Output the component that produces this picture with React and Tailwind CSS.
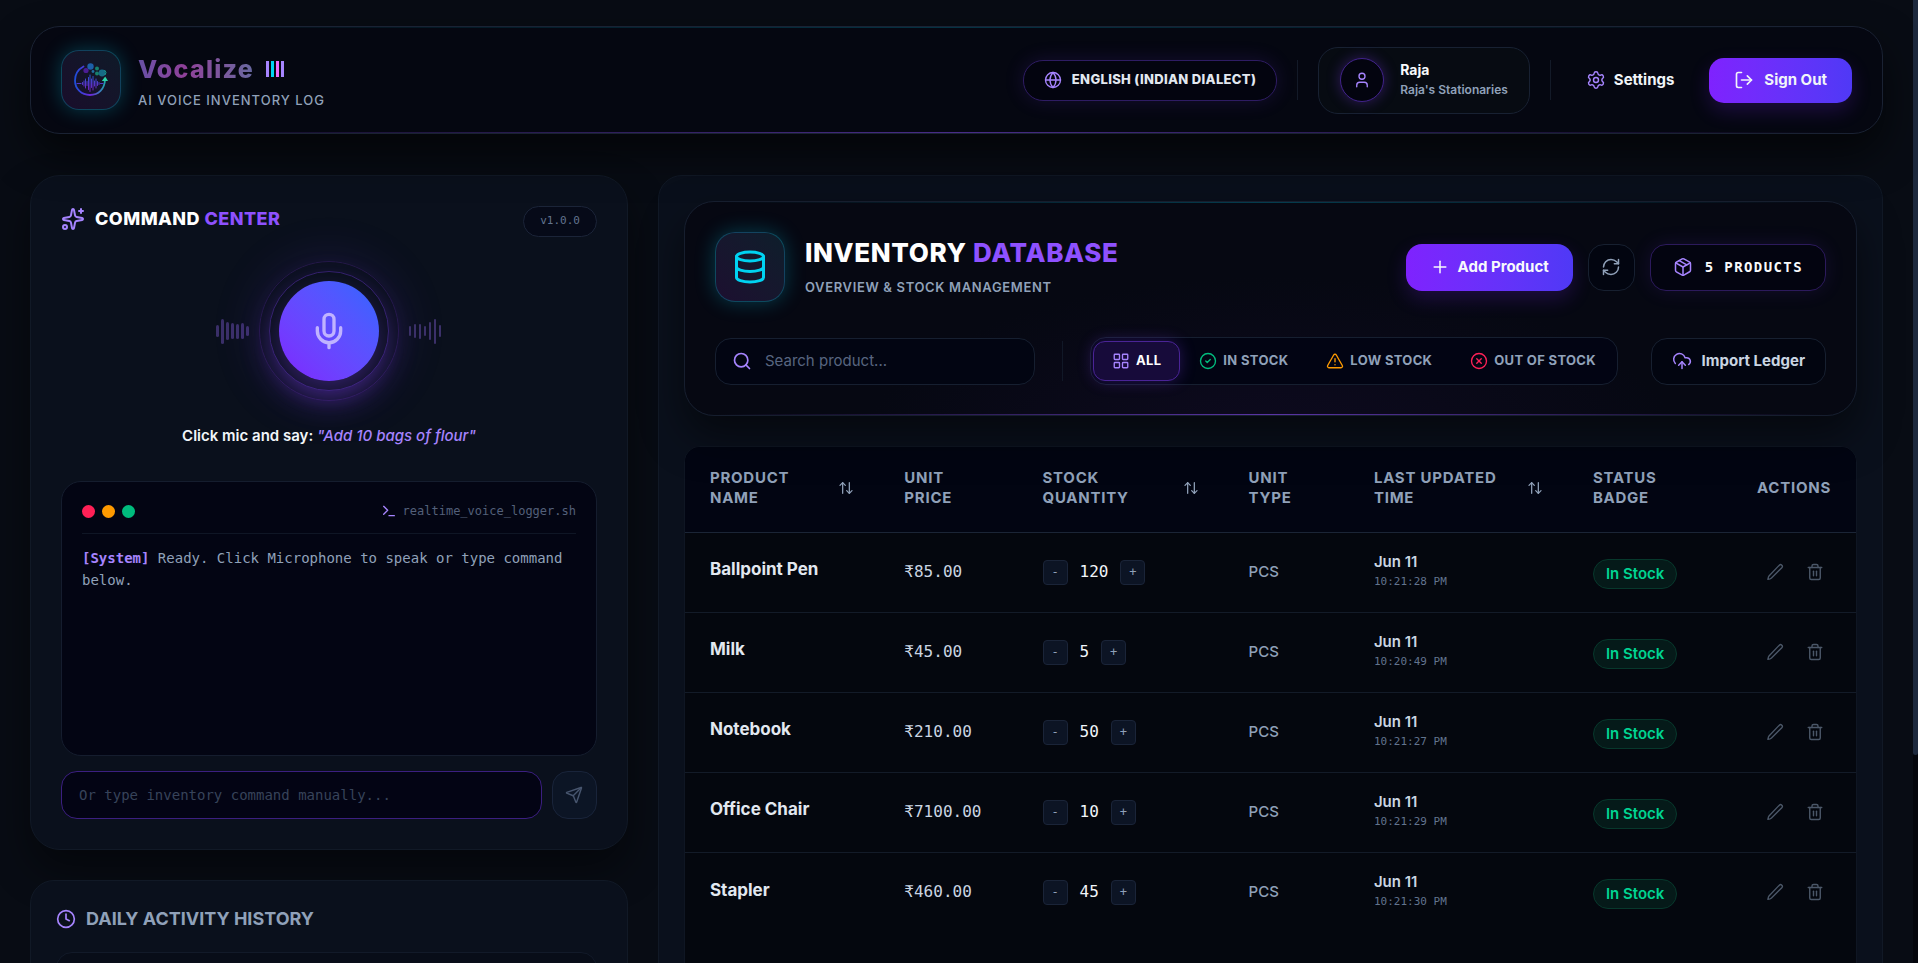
import {
  ArrowUpDown,
  CircleCheck,
  CircleX,
  Clock,
  CloudUpload,
  Database,
  Globe,
  LayoutGrid,
  LogOut,
  Mic,
  Package,
  Plus,
  RefreshCw,
  Search,
  Send,
  Settings,
  Sparkles,
  Terminal,
  Trash2,
  TriangleAlert,
  User,
} from 'lucide-react'

const PRODUCTS = [
  { name: 'Ballpoint Pen', price: '₹85.00', qty: 120, unit: 'PCS', date: 'Jun 11', time: '10:21:28 PM' },
  { name: 'Milk', price: '₹45.00', qty: 5, unit: 'PCS', date: 'Jun 11', time: '10:20:49 PM' },
  { name: 'Notebook', price: '₹210.00', qty: 50, unit: 'PCS', date: 'Jun 11', time: '10:21:27 PM' },
  { name: 'Office Chair', price: '₹7100.00', qty: 10, unit: 'PCS', date: 'Jun 11', time: '10:21:29 PM' },
  { name: 'Stapler', price: '₹460.00', qty: 45, unit: 'PCS', date: 'Jun 11', time: '10:21:30 PM' },
]

const COLUMNS = [
  { lines: ['PRODUCT', 'NAME'], sortable: true, width: 'w-[16.6%]' },
  { lines: ['UNIT', 'PRICE'], width: 'w-[11.8%]' },
  { lines: ['STOCK', 'QUANTITY'], sortable: true, width: 'w-[17.6%]' },
  { lines: ['UNIT', 'TYPE'], width: 'w-[10.7%]' },
  { lines: ['LAST UPDATED', 'TIME'], sortable: true, width: 'w-[18.7%]' },
  { lines: ['STATUS', 'BADGE'], width: 'w-[13.6%]' },
  { lines: ['ACTIONS'], right: true, width: 'w-[11%]' },
]

const FILTERS = [
  { label: 'ALL', icon: LayoutGrid, color: 'text-violet-400', active: true },
  { label: 'IN STOCK', icon: CircleCheck, color: 'text-emerald-500' },
  { label: 'LOW STOCK', icon: TriangleAlert, color: 'text-amber-500' },
  { label: 'OUT OF STOCK', icon: CircleX, color: 'text-rose-500' },
]

const LEFT_WAVE = ['h-3', 'h-[25px]', 'h-[18px]', 'h-4', 'h-[15px]', 'h-4', 'h-[10px]']
const RIGHT_WAVE = ['h-[10px]', 'h-[14px]', 'h-[15px]', 'h-[10px]', 'h-[18px]', 'h-[25px]', 'h-3']

const MONO = "font-['DejaVu_Sans_Mono',monospace]"

function Logo() {
  return (
    <svg viewBox="0 0 36 36" className="w-9 h-9" fill="none">
      <defs>
        <linearGradient id="ring" x1="2" y1="18" x2="34" y2="18" gradientUnits="userSpaceOnUse">
          <stop offset="0" stopColor="#1d4ed8" />
          <stop offset="0.5" stopColor="#6d28d9" />
          <stop offset="1" stopColor="#14b8a6" />
        </linearGradient>
        <linearGradient id="pulse" x1="18" y1="12" x2="18" y2="28" gradientUnits="userSpaceOnUse">
          <stop offset="0" stopColor="#2563eb" />
          <stop offset="1" stopColor="#7e22ce" />
        </linearGradient>
      </defs>
      <path d="M10.5 4.5C5 7.5 2 12.5 2 18.5C2 27 8.5 33 17 33C25.5 33 31.5 27 32 18" stroke="url(#ring)" strokeWidth="1.8" strokeLinecap="round" />
      <path d="M28.8 19L32.2 14.5L35 19Z" fill="#2dd4a7" />
      <path
        d="M4 21.5H8M9.5 20.5V22.5M11 19V24M12.5 17V26M14 19.5V23.5M15.5 15.5V27.5M17 13V29.5M18.5 17V25.5M20 14.5V28M21.5 19V24M23 17V26M24.5 19.5V23.5M26 20.5V22.5M27.5 21.5H30"
        stroke="url(#pulse)"
        strokeWidth="0.9"
        strokeLinecap="round"
      />
      <circle cx="17.5" cy="4.5" r="3.2" fill="#1d5fa8" />
      <circle cx="13" cy="8.5" r="2.6" fill="#4c1d95" />
      <circle cx="24" cy="6.5" r="2" fill="#17806d" />
      <circle cx="20" cy="9.5" r="1.4" fill="#1e6fa0" />
      <circle cx="24" cy="11.5" r="2" fill="#17806d" />
      <circle cx="29" cy="11" r="3.4" fill="#176b85" />
      <path d="M31.5 8A3.5 3.5 0 0 1 32 13" stroke="#14b8a6" strokeWidth="0.8" />
    </svg>
  )
}

function PencilIcon() {
  return (
    <svg viewBox="0 0 24 24" className="w-[18px] h-[18px]" fill="none" stroke="currentColor" strokeWidth="1.8" strokeLinecap="round" strokeLinejoin="round">
      <path d="M16.500 4.200l1.300-1.300a2.300 2.300 0 0 1 3.300 3.300L7.300 20a4.500 4.500 0 0 1-1.900 1.100L2.500 21.800l.7-3a4.500 4.500 0 0 1 1.100-1.900L16.500 4.200z" />
    </svg>
  )
}

function Header() {
  return (
    <header className="relative flex items-center justify-between rounded-[30px] border border-[#1a2233] bg-[#050711] px-[30px] py-[23px] shadow-[0_20px_40px_rgba(0,0,0,0.6)]">
      <div className="absolute top-0 inset-x-8 h-px bg-gradient-to-r from-transparent via-cyan-500/25 to-transparent" />
      <div className="absolute bottom-0 inset-x-8 h-px bg-gradient-to-r from-transparent via-violet-500/50 to-transparent" />

      <div className="flex items-center gap-[17px]">
        <div className="w-[60px] h-[60px] rounded-[18px] border border-cyan-400/25 bg-gradient-to-tr from-[#190d2b] to-[#0e1a28] flex items-center justify-center shadow-[0_0_20px_rgba(6,182,212,0.3)]">
          <Logo />
        </div>
        <div>
          <div className="flex items-center gap-3">
            <h1 className="text-[25px] leading-8 font-extrabold tracking-wider bg-gradient-to-r from-[#6750a6] via-[#8f4099] to-[#66689f] from-0% via-40% to-100% bg-clip-text text-transparent">
              Vocalize
            </h1>
            <div className="flex gap-[2px] h-4">
              <span className="w-[3px] bg-violet-400" />
              <span className="w-[3px] bg-cyan-400" />
              <span className="w-[3px] bg-fuchsia-400" />
              <span className="w-[3px] bg-violet-400" />
            </div>
          </div>
          <p className="mt-[7px] text-[13px] leading-4 font-medium tracking-[1px] text-slate-400">AI VOICE INVENTORY LOG</p>
        </div>
      </div>

      <div className="flex items-center gap-5 -my-1">
        <button className="flex items-center gap-[10px] h-[41px] px-5 rounded-[20px] border border-[#2e1c63] bg-[#03040f] text-[13px] font-extrabold tracking-wide text-slate-200 shadow-[0_0_20px_rgba(124,58,237,0.15)]">
          <Globe className="w-[18px] h-[18px] text-violet-400" strokeWidth={1.8} />
          ENGLISH (INDIAN DIALECT)
        </button>
        <div className="w-px h-10 bg-[#131a28]" />
        <div className="flex items-center gap-4 h-[67px] px-[21px] rounded-[20px] border border-[#182132] bg-[#070b12]">
          <div className="w-11 h-11 rounded-full border border-[#41238a] bg-[#03040f] flex items-center justify-center shadow-[0_0_14px_rgba(124,58,237,0.35)]">
            <User className="w-[18px] h-[18px] text-violet-400" strokeWidth={1.8} />
          </div>
          <div>
            <p className="text-[14px] leading-5 font-bold text-slate-50">Raja</p>
            <p className="text-[12px] leading-5 font-semibold text-slate-400">Raja's Stationaries</p>
          </div>
        </div>
        <div className="w-px h-10 bg-[#131a28]" />
        <button className="flex items-center gap-2 px-[15px] h-[45px] text-[15px] font-bold text-slate-100">
          <Settings className="w-5 h-5 text-violet-400" strokeWidth={1.7} />
          Settings
        </button>
        <button className="flex items-center gap-[10px] px-[25px] h-[45px] rounded-[15px] bg-gradient-to-r from-[#7f22fe] to-[#4f39f6] text-[15px] font-bold text-slate-100 shadow-[0_8px_20px_rgba(127,34,254,0.2)]">
          <LogOut className="w-5 h-5" strokeWidth={2} />
          Sign Out
        </button>
      </div>
    </header>
  )
}

function CommandCenter() {
  return (
    <section className="rounded-[30px] border border-[#111926] bg-[#0a101c] p-[30px] shadow-[0_20px_40px_rgba(0,0,0,0.45)]">
      <div className="flex items-start justify-between">
        <h2 className="flex items-center gap-[10px] text-[18px] leading-[26px] font-extrabold tracking-wide text-white">
          <Sparkles className="w-6 h-6 text-violet-400" strokeWidth={2} />
          <span>
            COMMAND <span className="text-[#8e51ff]">CENTER</span>
          </span>
        </h2>
        <span className={`${MONO} h-[31px] px-4 flex items-center rounded-2xl border border-[#1b2438] bg-[#060a18] text-[11px] text-slate-500`}>v1.0.0</span>
      </div>

      <div className="mt-6 flex items-center justify-center gap-[10px]">
        <div className="flex items-center gap-[2px]">
          {LEFT_WAVE.map((bar, index) => (
            <span key={index} className={`${bar} w-[3px] rounded-full bg-[#3b3069]`} />
          ))}
        </div>
        <div className="w-[140px] h-[140px] rounded-full border border-[#231846] flex items-center justify-center shadow-[0_0_50px_rgba(124,58,237,0.15)]">
          <div className="w-[120px] h-[120px] rounded-full border border-[#33216b] bg-[#0a101c] flex items-center justify-center shadow-[0_10px_30px_rgba(124,58,237,0.3)]">
            <button aria-label="Start recording" className="w-[100px] h-[100px] rounded-full bg-gradient-to-tr from-[#7f22fe] to-[#2b66ff] flex items-center justify-center shadow-[0_10px_24px_rgba(124,58,237,0.35)]">
              <Mic className="w-10 h-10 text-[#c0b3ff]" strokeWidth={2} />
            </button>
          </div>
        </div>
        <div className="flex items-center gap-[3px]">
          {RIGHT_WAVE.map((bar, index) => (
            <span key={index} className={`${bar} w-[2px] rounded-full bg-[#3b3069]`} />
          ))}
        </div>
      </div>

      <p className="mt-[25px] text-center text-[15px] leading-5 font-semibold text-slate-100">
        Click mic and say: <em className="font-medium text-violet-400">"Add 10 bags of flour"</em>
      </p>

      <div className={`${MONO} mt-[35px] h-[275px] rounded-[20px] border border-[#151d2e] bg-[#030513] px-5 pt-[19px]`}>
        <div className="flex items-center justify-between pb-3 border-b border-[#0f1625]">
          <div className="flex gap-[7px]">
            <span className="w-[13px] h-[13px] rounded-full bg-[#ff2056]" />
            <span className="w-[13px] h-[13px] rounded-full bg-[#fe9a00]" />
            <span className="w-[13px] h-[13px] rounded-full bg-[#00bc7d]" />
          </div>
          <div className="flex items-center gap-[6px] text-[12px] leading-5 text-[#53607a]">
            <Terminal className="w-4 h-4 text-violet-400" strokeWidth={2} />
            realtime_voice_logger.sh
          </div>
        </div>
        <p className="mt-[13px] text-[14px] leading-[22px] text-slate-400">
          <span className="font-bold text-violet-400">[System]</span> Ready. Click Microphone to speak or type command below.
        </p>
      </div>

      <form className="mt-[15px] flex gap-[10px]">
        <input
          type="text"
          aria-label="Inventory command"
          placeholder="Or type inventory command manually..."
          className={`${MONO} flex-1 min-w-0 h-12 px-[17px] rounded-2xl border border-[#3b1f80] bg-[#030414] text-[14px] text-slate-200 placeholder:text-[#37435a]`}
        />
        <button type="button" aria-label="Send command" className="w-[45px] h-12 rounded-2xl border border-[#19243a] bg-[#0c1525] flex items-center justify-center text-[#47556e]">
          <Send className="w-[18px] h-[18px]" strokeWidth={1.9} />
        </button>
      </form>
    </section>
  )
}

function ActivityHistory() {
  return (
    <section className="rounded-[24px] border border-[#111926] bg-[#0a101c] px-[25px] py-[26px]">
      <h2 className="flex items-center gap-[10px] text-[18px] leading-6 font-bold text-slate-400">
        <Clock className="w-5 h-5 text-violet-400" strokeWidth={2} />
        DAILY ACTIVITY HISTORY
      </h2>
      <div className="mt-[21px] mr-[5px] h-24 rounded-2xl border border-[#121a29] bg-[#080d18]" />
    </section>
  )
}

function InventoryHeader() {
  return (
    <div className="relative rounded-[30px] border border-[#161e2e] bg-[radial-gradient(ellipse_at_50%_120%,#0e0a20_0%,#060812_50%)] p-[30px] shadow-[0_20px_40px_rgba(0,0,0,0.5)]">
      <div className="absolute top-0 inset-x-8 h-px bg-gradient-to-r from-transparent via-cyan-500/30 to-transparent" />
      <div className="absolute bottom-0 inset-x-8 h-px bg-gradient-to-r from-transparent via-violet-500/60 to-transparent" />

      <div className="flex items-center justify-between">
        <div className="flex items-center gap-5">
          <div className="w-[70px] h-[70px] rounded-[20px] border border-cyan-400/25 bg-gradient-to-tr from-[#1c0f30] to-[#0d1e2b] flex items-center justify-center shadow-[0_0_20px_rgba(6,182,212,0.3)]">
            <Database className="w-9 h-9 text-[#00d3f2]" strokeWidth={2} />
          </div>
          <div>
            <h2 className="text-[26px] leading-8 font-extrabold tracking-wide text-white">
              INVENTORY <span className="text-[#8e51ff]">DATABASE</span>
            </h2>
            <p className="mt-2 text-[13px] leading-5 font-semibold tracking-wider text-slate-400">OVERVIEW &amp; STOCK MANAGEMENT</p>
          </div>
        </div>
        <div className="flex items-center gap-[15px]">
          <button className="flex items-center gap-2 px-6 h-[47px] rounded-2xl bg-gradient-to-r from-[#7f22fe] to-[#4f39f6] text-[15px] font-bold text-slate-50 shadow-[0_8px_20px_rgba(127,34,254,0.2)]">
            <Plus className="w-5 h-5" strokeWidth={1.8} />
            Add Product
          </button>
          <button aria-label="Refresh" className="w-[47px] h-[47px] rounded-2xl border border-[#172030] bg-[#020510] flex items-center justify-center text-slate-400">
            <RefreshCw className="w-5 h-5" strokeWidth={1.8} />
          </button>
          <div className={`${MONO} flex items-center gap-3 h-[47px] px-[22px] rounded-2xl border border-[#2c1a5c] bg-[#030410] text-[14px] font-bold tracking-widest text-slate-50 shadow-[0_0_20px_rgba(124,58,237,0.12)]`}>
            <Package className="w-5 h-5 text-violet-400" strokeWidth={1.8} />
            5 PRODUCTS
          </div>
        </div>
      </div>

      <div className="mt-[35px] flex items-center justify-between">
        <div className="flex items-center gap-[27px]">
          <label className="flex items-center gap-[13px] w-[320px] h-[47px] px-4 rounded-2xl border border-[#161f30] bg-[#020512]">
            <Search className="w-5 h-5 text-violet-400" strokeWidth={2} />
            <input type="text" aria-label="Search product" placeholder="Search product..." className="flex-1 min-w-0 bg-transparent text-[15px] text-slate-200 placeholder:text-[#586580] outline-none" />
          </label>
          <div className="w-px h-10 bg-[#111827]" />
          <div className="flex items-center h-12 p-[2px] rounded-2xl border border-[#161f30] bg-[#020413]">
            {FILTERS.map((filter) => (
              <button
                key={filter.label}
                className={`flex items-center gap-[6px] h-10 px-[18px] rounded-xl border text-[13px] font-bold tracking-wide ${
                  filter.active
                    ? 'border-[#4a2496] bg-[#170b3a] text-white shadow-[0_0_16px_rgba(124,58,237,0.3)]'
                    : 'border-transparent text-slate-400'
                }`}
              >
                <filter.icon className={`w-[18px] h-[18px] ${filter.color}`} strokeWidth={1.8} />
                {filter.label}
              </button>
            ))}
          </div>
        </div>
        <button className="flex items-center gap-[10px] h-[47px] px-5 rounded-2xl border border-[#172030] bg-[#020510] text-[15px] font-bold text-slate-300">
          <CloudUpload className="w-5 h-5 text-violet-400" strokeWidth={1.8} />
          Import Ledger
        </button>
      </div>
    </div>
  )
}

function ProductTable() {
  return (
    <div className="mt-[30px] min-h-[560px] rounded-2xl border border-[#0f1623] bg-[#04070e] overflow-hidden">
      <table className="w-full table-fixed border-collapse text-left">
        <thead>
          <tr className="h-[85px] bg-[#020512] border-b border-[#1b2536]">
            {COLUMNS.map((col) => (
              <th key={col.lines.join(' ')} scope="col" className={`${col.width} px-[25px] pb-[2px] text-[15px] leading-5 font-bold tracking-wider text-slate-400`}>
                <div className={`flex items-center whitespace-nowrap ${col.right ? 'justify-end' : 'justify-between'}`}>
                  <span>
                    {col.lines[0]}
                    {col.lines[1] && <br />}
                    {col.lines[1]}
                  </span>
                  {col.sortable && (
                    <button aria-label={`Sort by ${col.lines.join(' ').toLowerCase()}`}>
                      <ArrowUpDown className="w-4 h-4" strokeWidth={1.9} />
                    </button>
                  )}
                </div>
              </th>
            ))}
          </tr>
        </thead>
        <tbody>
          {PRODUCTS.map((product) => (
            <tr key={product.name} className="h-20 border-b border-[#131b28] last:border-b-0">
              <td className="px-[25px] pb-1 text-[17px] font-bold text-slate-200">{product.name}</td>
              <td className={`${MONO} px-[25px] text-[16px] text-slate-300`}>{product.price}</td>
              <td className="px-[25px]">
                <div className={`${MONO} flex items-center gap-3`}>
                  <button aria-label={`Decrease ${product.name}`} className="w-[25px] h-[25px] rounded border border-[#1a2438] bg-[#0c1424] text-[12px] leading-5 text-slate-400">-</button>
                  <span className="text-[16px] text-slate-100">{product.qty}</span>
                  <button aria-label={`Increase ${product.name}`} className="w-[25px] h-[25px] rounded border border-[#1a2438] bg-[#0c1424] text-[12px] leading-5 text-slate-400">+</button>
                </div>
              </td>
              <td className="px-[25px] text-[15px] font-medium text-slate-400">{product.unit}</td>
              <td className="px-[25px]">
                <p className="text-[15px] leading-5 font-semibold text-slate-300">{product.date}</p>
                <p className={`${MONO} text-[11px] leading-5 text-slate-500`}>{product.time}</p>
              </td>
              <td className="px-[25px] pt-1">
                <span className="inline-flex items-center h-[30px] px-3 rounded-full border border-[#07382c] bg-[#051a19] text-[15px] font-semibold text-[#00d492]">In Stock</span>
              </td>
              <td className="px-[25px]">
                <div className="flex justify-end gap-[22px] pr-[7px] text-[#4b5768]">
                  <button aria-label={`Edit ${product.name}`}>
                    <PencilIcon />
                  </button>
                  <button aria-label={`Delete ${product.name}`}>
                    <Trash2 className="w-[18px] h-[18px]" strokeWidth={1.9} />
                  </button>
                </div>
              </td>
            </tr>
          ))}
        </tbody>
      </table>
    </div>
  )
}

export default function App() {
  return (
    <div className="h-screen flex overflow-hidden bg-[#080c14] font-['Inter',sans-serif]">
      <div className="flex-1 min-w-0 px-[30px] pt-[26px]">
        <Header />
        <main className="mt-[41px] flex items-start gap-[30px]">
          <div className="w-[32.27%] flex flex-col gap-[30px]">
            <CommandCenter />
            <ActivityHistory />
          </div>
          <section className="flex-1 min-w-0 rounded-[24px] border border-[#111926] bg-[#0a101c] p-[25px]">
            <InventoryHeader />
            <ProductTable />
          </section>
        </main>
      </div>
      {/* page scroll track */}
      <div className="w-[5px] shrink-0 bg-[#04060c]">
        <div className="h-[78.4%] rounded-b bg-[#1d293d]" />
      </div>
    </div>
  )
}
